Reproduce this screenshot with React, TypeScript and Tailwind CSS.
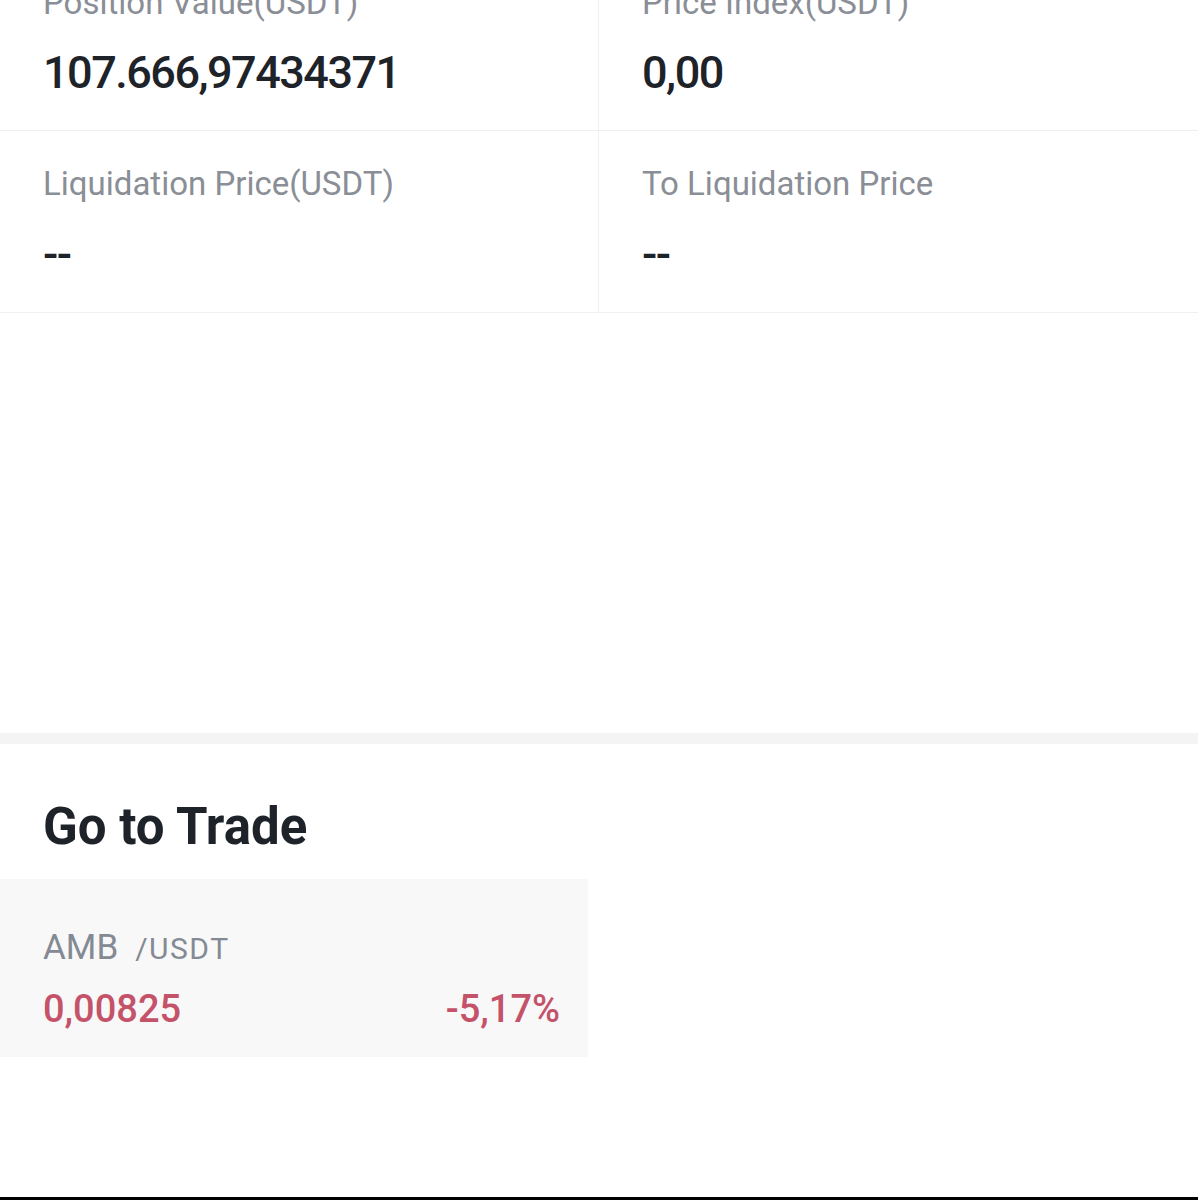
import React from 'react';

const cells = [
    { label: 'Position Value(USDT)', value: '107.666,97434371' },
    { label: 'Price Index(USDT)', value: '0,00' },
    { label: 'Liquidation Price(USDT)', value: '--' },
    { label: 'To Liquidation Price', value: '--' },
];

const App: React.FC = () => {
    return (
        <div className="w-full h-[1200px] bg-white overflow-hidden flex flex-col border-b-[3px] border-black font-['Roboto',sans-serif]">
            {/* Position details grid (top row cut off) */}
            <div className="grid grid-cols-2 mt-[-50px] border-b border-[#eeeff2]">
                {cells.map((cell, i) => (
                    <div
                        key={cell.label}
                        className={`h-[181px] px-[43px] pt-[33px] ${i % 2 === 0 ? 'border-r border-[#eeeff2]' : ''} ${i < 2 ? 'border-b border-[#eeeff2]' : ''}`}
                    >
                        <p className="text-[33px] leading-[40px] text-[#8a8e96]">{cell.label}</p>
                        <p className="mt-[24px] text-[45px] leading-[52px] font-medium tracking-[-1.5px] text-[#1e2329]">
                            {cell.value}
                        </p>
                    </div>
                ))}
            </div>

            <div className="h-[420px]" />
            <div className="h-[11px] bg-[#f4f4f5]" />

            {/* Go to Trade */}
            <h2 className="mt-[53px] px-[43px] text-[51px] leading-[60px] font-bold text-[#1e2329]">Go to Trade</h2>
            <div className="mt-[22px] w-[588px] h-[178px] bg-[#f8f8f8] pl-[43px] pr-[28px] pt-[49px]">
                <div className="flex items-baseline gap-[17px] leading-[40px] text-[#848a93]">
                    <span className="text-[35px]">AMB</span>
                    <span className="text-[30px] tracking-[1.5px]">/USDT</span>
                </div>
                <div className="mt-[18px] flex items-baseline justify-between text-[38px] leading-[44px] font-medium text-[#c4536a]">
                    <span>0,00825</span>
                    <span>-5,17%</span>
                </div>
            </div>
        </div>
    );
};

export default App;
